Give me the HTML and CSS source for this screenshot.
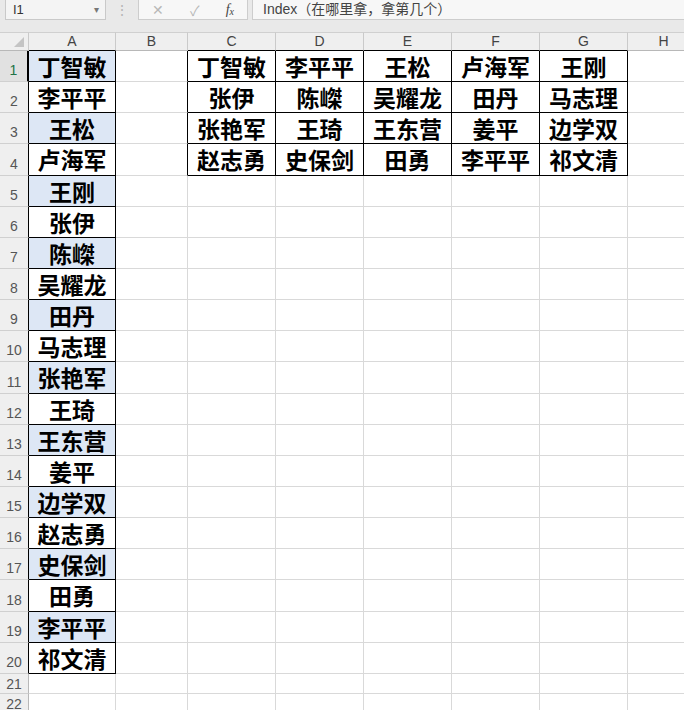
FILE: index.html
```html
<!DOCTYPE html>
<html lang="zh-CN">
<head>
    <meta charset="UTF-8">
    <meta name="viewport" content="width=device-width, initial-scale=1.0">
    <title>Index（在哪里拿，拿第几个）</title>
    <link rel="stylesheet" href="styles.css">
</head>
<body>
    <div class="window">
        <!-- Name box + formula bar -->
        <div class="formula-bar">
            <div class="name-box">
                <span>I1</span>
                <span class="drop">&#9662;</span>
            </div>
            <div class="grip">&#8942;</div>
            <div class="fx-buttons">
                <span class="fx-btn">&#10005;</span>
                <span class="fx-btn">&#10003;</span>
                <span class="fx-btn fx">f<sub>x</sub></span>
            </div>
            <div class="formula-input">Index（在哪里拿，拿第几个）</div>
        </div>
        <div class="band"></div>

        <div class="sheet">
            <table class="grid">
                <colgroup>
                    <col class="c-head">
                    <col class="c-a">
                    <col class="c-b">
                    <col class="c-wide">
                    <col class="c-wide">
                    <col class="c-wide">
                    <col class="c-wide">
                    <col class="c-wide">
                    <col class="c-b">
                </colgroup>
                <thead>
                    <tr class="col-heads">
                        <th class="corner"><span class="corner-tri"></span></th>
                        <th class="edge-b">A</th>
                        <th>B</th>
                        <th class="edge-b">C</th>
                        <th class="edge-b">D</th>
                        <th class="edge-b">E</th>
                        <th class="edge-b">F</th>
                        <th class="edge-b">G</th>
                        <th>H</th>
                    </tr>
                </thead>
                <tbody id="rows"></tbody>
            </table>
        </div>
    </div>

    <script>
        const names = ['丁智敏', '李平平', '王松', '卢海军', '王刚', '张伊', '陈嵥', '吴耀龙', '田丹', '马志理',
                       '张艳军', '王琦', '王东营', '姜平', '边学双', '赵志勇', '史保剑', '田勇', '李平平', '祁文清'];

        const tbody = document.getElementById('rows');

        for (let r = 1; r <= 22; r++) {
            const tr = document.createElement('tr');
            tr.className = r <= 20 ? 'row' : 'row short';

            const head = document.createElement('th');
            head.className = 'row-head';
            if (r <= 20) head.classList.add('edge-r');
            if (r === 1) head.classList.add('active');
            head.textContent = r;
            tr.appendChild(head);

            // column A: the list, every other row shaded
            const a = document.createElement('td');
            if (r <= 20) {
                a.className = 'cell b' + (r % 2 ? ' shade' : '');
                a.textContent = names[r - 1];
            }
            tr.appendChild(a);

            // column B
            const b = document.createElement('td');
            if (r <= 4) b.className = 'edge-r';
            tr.appendChild(b);

            // C..G: the same list laid out five across
            for (let c = 0; c < 5; c++) {
                const td = document.createElement('td');
                if (r <= 4) {
                    td.className = 'cell b';
                    td.textContent = names[(r - 1) * 5 + c];
                }
                tr.appendChild(td);
            }

            tr.appendChild(document.createElement('td'));
            tbody.appendChild(tr);
        }
    </script>
</body>
</html>
```

FILE: styles.css
```css
body {
    margin: 0;
    background-color: #ffffff;
    font-family: "Liberation Sans", Arial, "Noto Sans CJK SC", sans-serif;
}
.window {
    width: 684px;
    height: 710px;
    overflow: hidden;
    background-color: #e9e9e9;
}

/* Formula bar */
.formula-bar {
    display: flex;
    height: 22px;
    padding-left: 5px;
}
.name-box {
    display: flex;
    align-items: center;
    justify-content: space-between;
    width: 101px;
    height: 21px;
    margin-top: -1px;
    padding: 0 6px 0 7px;
    box-sizing: border-box;
    background-color: #f4f4f4;
    border: 1px solid #c9c9c9;
    font-size: 13px;
    color: #333;
}
.name-box .drop {
    font-size: 10px;
    color: #777;
}
.grip {
    width: 32px;
    text-align: center;
    color: #b5b5b5;
    font-size: 14px;
    line-height: 20px;
}
.fx-buttons {
    display: flex;
    align-items: center;
    justify-content: space-around;
    width: 110px;
    height: 21px;
    margin-top: -1px;
    box-sizing: border-box;
    background-color: #f7f7f7;
    border: 1px solid #cdcdcd;
    color: #b8b8b8;
    font-size: 14px;
}
.fx-btn.fx {
    color: #444;
    font-family: "Liberation Serif", serif;
    font-style: italic;
    font-size: 14px;
}
.fx-btn.fx sub {
    font-size: 10px;
    vertical-align: -1px;
}
.formula-input {
    flex: 1;
    height: 21px;
    margin: -1px 0 0 4px;
    padding-left: 10px;
    box-sizing: border-box;
    background-color: #f7f7f7;
    border: 1px solid #cdcdcd;
    border-right: none;
    font-size: 14px;
    line-height: 19px;
    color: #444;
    white-space: nowrap;
}
.band {
    height: 10px;
}

/* Sheet grid */
.sheet {
    background-color: #ffffff;
}
.grid {
    table-layout: fixed;
    width: 700px;
    border-collapse: separate;
    border-spacing: 0;
}
.c-head { width: 29px; }
.c-a { width: 87px; }
.c-b { width: 72px; }
.c-wide { width: 88px; }

.grid th,
.grid td {
    padding: 0;
    border-right: 1px solid #d9d9d9;
    border-bottom: 1px solid #d9d9d9;
    white-space: nowrap;
}
.col-heads th {
    height: 17px;
    background-color: #efefef;
    border-top: 1px solid #d0d0d0;
    border-right-color: #cacaca;
    border-bottom-color: #b8b8b8;
    font-weight: normal;
    font-size: 14px;
    color: #444;
    line-height: 17px;
}
.corner {
    position: relative;
}
.corner-tri {
    position: absolute;
    right: 4px;
    bottom: 3px;
    width: 0;
    height: 0;
    border-left: 10px solid transparent;
    border-bottom: 10px solid #c4c4c4;
}
.row {
    height: 31.15px;
}
.row.short {
    height: 20px;
}
.row-head {
    background-color: #efefef;
    border-right-color: #b8b8b8 !important;
    border-bottom-color: #d0d0d0 !important;
    font-weight: normal;
    font-size: 14px;
    color: #555;
    vertical-align: bottom;
    padding-bottom: 3px !important;
    line-height: 16px;
}
.row-head.active {
    color: #217346;
    background-color: #e1e1e1;
    border-right: 2px solid #217346;
}
.short .row-head {
    padding-bottom: 1px !important;
}

.cell {
    text-align: center;
    vertical-align: middle;
    font-family: "Noto Sans CJK SC", "Liberation Sans", sans-serif;
    font-weight: 700;
    font-size: 23px;
    line-height: 30px;
    color: #000;
}
.shade {
    background-color: #dde7f5;
}

/* black outline round the data blocks */
.grid .b {
    border-right-color: #000;
    border-bottom-color: #000;
}
.grid .edge-r {
    border-right-color: #000 !important;
}
.grid .edge-b {
    border-bottom-color: #000;
}
```
